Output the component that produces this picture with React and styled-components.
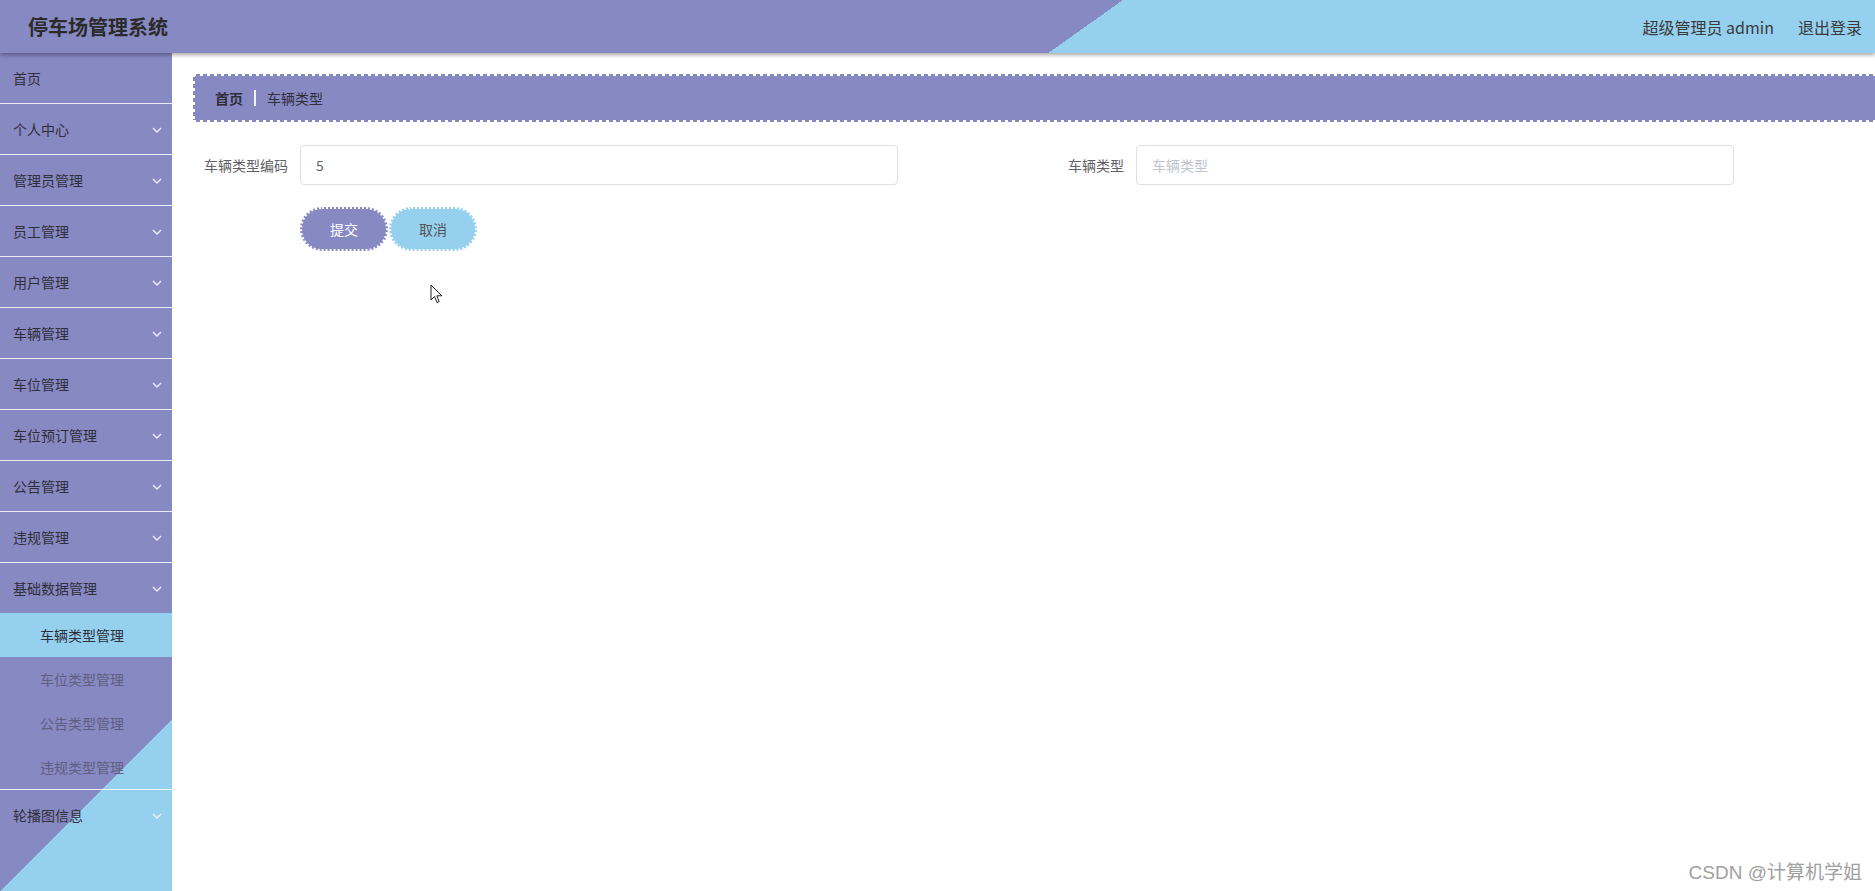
import React from 'react';
import styled, { createGlobalStyle } from 'styled-components';

const PURPLE = '#8789c3';
const BLUE = '#96d0ef';

const GlobalStyle = createGlobalStyle`
  html, body {
    margin: 0;
    padding: 0;
    height: 100%;
    overflow: hidden;
  }
  body {
    font-family: "Noto Sans CJK SC", "Noto Sans", sans-serif;
    background: #fff;
    color: #333;
  }
  * {
    box-sizing: border-box;
  }
`;

const Page = styled.div`
  position: relative;
  height: 100vh;
  display: flex;
  flex-direction: column;
  overflow: hidden;
`;

const Header = styled.header`
  position: relative;
  z-index: 2;
  flex-shrink: 0;
  height: 53px;
  display: flex;
  align-items: center;
  justify-content: space-between;
  padding: 0 13px 0 28px;
  background: linear-gradient(144.6deg, ${PURPLE} 57.6%, ${BLUE} 57.6%);
  box-shadow: 0 2px 4px rgba(0, 0, 0, 0.35);
`;

const Title = styled.h1`
  margin: 0;
  font-size: 20px;
  font-weight: bold;
  line-height: 1;
  color: #2b2b2b;
`;

const UserBar = styled.div`
  display: flex;
  align-items: center;
  gap: 24px;
  font-size: 16px;
  line-height: 1;
  color: #3a3a3a;
`;

const Body = styled.div`
  flex: 1;
  min-height: 0;
  display: flex;
`;

const Sidebar = styled.nav`
  width: 172px;
  flex-shrink: 0;
  background: linear-gradient(135deg, ${PURPLE} 83%, ${BLUE} 83%);
  overflow: hidden;
`;

const Group = styled.div`
  border-bottom: ${(p) => (p.$last ? 'none' : '1px solid rgba(255, 255, 255, 0.85)')};
`;

const MenuTitle = styled.div`
  height: 50px;
  display: flex;
  align-items: center;
  justify-content: space-between;
  padding: 0 10px 0 13px;
  font-size: 14px;
  line-height: 1;
  color: #2f2f3a;
`;

const Chevron = styled.svg`
  display: block;
  margin-top: 1px;
`;

const SubItem = styled.div`
  height: 44px;
  display: flex;
  align-items: center;
  padding-left: 40px;
  font-size: 14px;
  line-height: 1;
  color: ${(p) => (p.$active ? '#2f2f3a' : '#5e5f80')};
  background: ${(p) => (p.$active ? BLUE : 'transparent')};
`;

const Main = styled.main`
  flex: 1;
  min-width: 0;
  padding: 21px 0 0 21px;
  overflow: hidden;
`;

// stamp-like edge: white dashes drawn over the purple fill along each side
const edgeH = 'repeating-linear-gradient(90deg, #fff 0 3px, transparent 3px 7px)';
const edgeV = 'repeating-linear-gradient(180deg, #fff 0 3px, transparent 3px 7px)';

const Breadcrumb = styled.div`
  width: calc(100% + 40px);
  height: 48px;
  display: flex;
  align-items: center;
  padding-left: 22px;
  background:
    ${edgeH} left top / 100% 2px no-repeat,
    ${edgeH} left bottom / 100% 2px no-repeat,
    ${edgeV} left top / 2px 100% no-repeat,
    ${PURPLE};
  font-size: 14px;
  line-height: 1;
`;

const Crumb = styled.span`
  color: #2f2f3a;
  font-weight: ${(p) => (p.$strong ? 'bold' : 'normal')};
`;

const CrumbSep = styled.span`
  width: 2px;
  height: 16px;
  margin: 0 11px;
  background: #f4f4fb;
`;

const Form = styled.form`
  margin-top: 23px;
  display: grid;
  grid-template-columns: 836px 836px;
  row-gap: 22px;
`;

const FormItem = styled.div`
  display: flex;
  align-items: center;
`;

const Label = styled.label`
  width: 107px;
  padding-right: 12px;
  text-align: right;
  font-size: 14px;
  line-height: 1;
  color: #606266;
`;

const Input = styled.input`
  width: 598px;
  height: 40px;
  padding: 0 15px;
  border: 1px solid #dcdfe6;
  border-radius: 4px;
  font-family: inherit;
  font-size: 14px;
  color: #606266;
  outline: none;

  &::placeholder {
    color: #c0c4cc;
  }
`;

const Actions = styled.div`
  grid-column: 1 / 2;
  display: flex;
  gap: 1px;
  padding-left: 107px;
`;

const Button = styled.button`
  width: 88px;
  height: 44px;
  border-radius: 22px;
  border: 2px dotted #fff;
  background: ${(p) => (p.$primary ? PURPLE : BLUE)};
  color: ${(p) => (p.$primary ? '#fff' : '#555')};
  font-family: inherit;
  font-size: 14px;
  cursor: pointer;
`;

const Cursor = styled.svg`
  position: absolute;
  left: 430px;
  top: 284px;
`;

const Watermark = styled.div`
  position: absolute;
  right: 13px;
  bottom: 9px;
  font-family: "Liberation Sans", "Noto Sans CJK SC", sans-serif;
  font-size: 19px;
  line-height: 1;
  color: #a0a0a0;
`;

const menus = [
  { name: '首页', arrow: false },
  { name: '个人中心' },
  { name: '管理员管理' },
  { name: '员工管理' },
  { name: '用户管理' },
  { name: '车辆管理' },
  { name: '车位管理' },
  { name: '车位预订管理' },
  { name: '公告管理' },
  { name: '违规管理' },
  { name: '基础数据管理', children: ['车辆类型管理', '车位类型管理', '公告类型管理', '违规类型管理'] },
  { name: '轮播图信息', last: true },
];

const App = () => {
  return (
    <Page>
      <GlobalStyle />
      <Header>
        <Title>停车场管理系统</Title>
        <UserBar>
          <span>超级管理员 admin</span>
          <span>退出登录</span>
        </UserBar>
      </Header>
      <Body>
        <Sidebar>
          {menus.map((m) => (
            <Group key={m.name} $last={m.last}>
              <MenuTitle>
                <span>{m.name}</span>
                {m.arrow !== false && (
                  <Chevron width="10" height="6" viewBox="0 0 10 6">
                    <polyline points="1,1 5,5 9,1" fill="none" stroke="#eeeefa" strokeWidth="1.4" />
                  </Chevron>
                )}
              </MenuTitle>
              {m.children &&
                m.children.map((c, i) => (
                  <SubItem key={c} $active={i === 0}>
                    {c}
                  </SubItem>
                ))}
            </Group>
          ))}
        </Sidebar>
        <Main>
          <Breadcrumb>
            <Crumb $strong>首页</Crumb>
            <CrumbSep />
            <Crumb>车辆类型</Crumb>
          </Breadcrumb>
          <Form onSubmit={(e) => e.preventDefault()}>
            <FormItem>
              <Label>车辆类型编码</Label>
              <Input defaultValue="5" />
            </FormItem>
            <FormItem>
              <Label>车辆类型</Label>
              <Input placeholder="车辆类型" />
            </FormItem>
            <Actions>
              <Button type="submit" $primary>提交</Button>
              <Button type="button">取消</Button>
            </Actions>
          </Form>
        </Main>
      </Body>
      <Cursor width="13" height="20" viewBox="0 0 13 20">
        <path d="M1 1 L1 16 L4.5 12.5 L7 18.5 L9.2 17.6 L6.8 11.8 L11.8 11.8 Z" fill="#fff" stroke="#222" strokeWidth="1" strokeLinejoin="round" />
      </Cursor>
      <Watermark>CSDN @计算机学姐</Watermark>
    </Page>
  );
};

export default App;
